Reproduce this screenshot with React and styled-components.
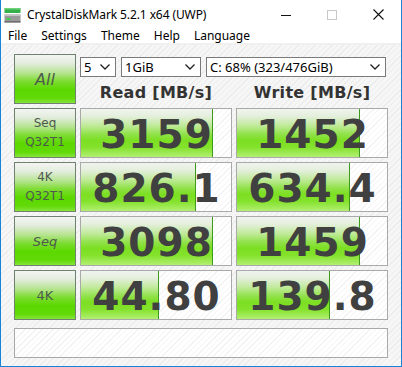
import React from 'react';
import styled, { createGlobalStyle } from 'styled-components';

const GlobalStyle = createGlobalStyle`
  html, body {
    margin: 0;
    padding: 0;
    background: #ffffff;
  }
  * {
    box-sizing: border-box;
  }
`;

const hatch = `repeating-linear-gradient(-45deg, #f6f6f6 0px, #f6f6f6 3px, #ececec 3px, #ececec 4px)`;
const hatchLight = `repeating-linear-gradient(-45deg, #ffffff 0px, #ffffff 3px, #f3f3f3 3px, #f3f3f3 4px)`;

const Window = styled.div`
  width: 402px;
  height: 367px;
  display: flex;
  flex-direction: column;
  border: 1px solid #1883d7;
  border-top: none;
  background: #ffffff;
  overflow: hidden;
`;

const TitleBar = styled.div`
  height: 29px;
  display: flex;
  align-items: center;
  padding-left: 3px;
  font-family: 'Noto Sans', 'DejaVu Sans', sans-serif;
  font-size: 12px;
  color: #000;
`;

const TitleText = styled.span`
  margin-left: 6px;
  flex: 1;
  letter-spacing: -0.1px;
`;

const WinButton = styled.div`
  width: 46px;
  height: 29px;
  display: flex;
  align-items: center;
  justify-content: center;
`;

const MenuBar = styled.div`
  height: 14px;
  display: flex;
  align-items: center;
  font-family: 'Noto Sans', 'DejaVu Sans', sans-serif;
  font-size: 12px;
  color: #000;
`;

const MenuItem = styled.span`
  padding: 0 7px;
  line-height: 14px;
`;

const Content = styled.div`
  flex: 1;
  border-top: 2px solid #f0f0f0;
  background: ${hatch};
  padding: 9px 13px 0 13px;
`;

const Grid = styled.div`
  display: grid;
  grid-template-columns: 62px 152px 152px;
  grid-auto-rows: 50px;
  column-gap: 4px;
  row-gap: 4px;
`;

const LabelButton = styled.div`
  border: 1px solid #6f826f;
  background: linear-gradient(
    #f4f5f3 0%,
    #e2ecdc 18%,
    #b4e48c 38%,
    #7cdc30 55%,
    #5cd800 72%,
    #62da08 90%,
    #86e43c 100%
  );
  display: flex;
  flex-direction: column;
  align-items: center;
  justify-content: center;
  font-family: 'DejaVu Sans', Verdana, sans-serif;
  font-size: ${p => p.$size || 12}px;
  font-style: ${p => (p.$italic ? 'italic' : 'normal')};
  color: #4e5a4c;
  line-height: 19px;
`;

const HeaderArea = styled.div`
  grid-column: 2 / span 2;
  display: flex;
  flex-direction: column;
`;

const SelectRow = styled.div`
  display: flex;
  margin-top: 3px;
  gap: 6px;
`;

const Select = styled.div`
  width: ${p => p.$w}px;
  height: 20px;
  border: 1px solid #7a7a7a;
  background: #ffffff;
  display: flex;
  align-items: center;
  justify-content: space-between;
  padding: 0 5px 0 3px;
  font-family: 'Noto Sans', 'DejaVu Sans', sans-serif;
  font-size: 13px;
  color: #000;
  & + & {
    margin-left: ${p => p.$shift || 0}px;
  }
`;

const HeaderRow = styled.div`
  display: grid;
  grid-template-columns: 152px 152px;
  column-gap: 4px;
  margin-top: 6px;
`;

const Header = styled.div`
  text-align: center;
  font-family: 'DejaVu Sans', Verdana, sans-serif;
  font-weight: bold;
  font-size: 16px;
  letter-spacing: 0.3px;
  line-height: 20px;
  color: #333333;
`;

const ValueCell = styled.div`
  position: relative;
  border: 1px solid #a9a9a9;
  background: ${hatchLight};
  overflow: hidden;
`;

const Bar = styled.div`
  position: absolute;
  left: 0;
  top: 0;
  bottom: 0;
  border-right: 1px solid #3c9a1c;
  background: linear-gradient(
    #f0f3ee 0%,
    #e4efdc 15%,
    #bfea98 35%,
    #92e24c 52%,
    #7cdf22 65%,
    #84e22c 80%,
    #b2ef72 100%
  );
`;

const Value = styled.div`
  position: relative;
  text-align: center;
  font-family: 'DejaVu Sans', Verdana, sans-serif;
  font-weight: bold;
  font-size: 39px;
  line-height: 42px;
  padding-top: 5px;
  padding-left: 1px;
  color: #404040;
  letter-spacing: 1px;
`;

const StatusBar = styled.div`
  margin-top: 8px;
  width: 374px;
  height: 30px;
  border: 1px solid #a9a9a9;
  background: ${hatchLight};
`;

const Chevron = () => (
  <svg width="10" height="6" viewBox="0 0 10 6">
    <polyline points="0.5,0.5 5,5 9.5,0.5" fill="none" stroke="#222" strokeWidth="1.3" />
  </svg>
);

const AppIcon = () => (
  <svg width="17" height="16" viewBox="0 0 17 16">
    <rect x="0.5" y="1" width="16" height="5" fill="#36b04a" />
    <rect x="0.5" y="1" width="16" height="1.5" fill="#6fd27a" />
    <rect x="0.5" y="7.5" width="16" height="8" fill="#9a9a9a" />
    <rect x="0.5" y="7.5" width="16" height="1.5" fill="#c4c4c4" />
    <rect x="0.5" y="14" width="16" height="1.5" fill="#6e6e6e" />
    <rect x="2.5" y="11" width="4" height="2" fill="#3ccf4a" />
  </svg>
);

const rows = [
  { label: ['Seq', 'Q32T1'], read: '3159', rp: 88, write: '1452', wp: 82 },
  { label: ['4K', 'Q32T1'], read: '826.1', rp: 76.5, write: '634.4', wp: 75 },
  { label: ['Seq'], size: 13, italic: true, read: '3098', rp: 88, write: '1459', wp: 82 },
  { label: ['4K'], size: 13, read: '44.80', rp: 52, write: '139.8', wp: 62 }
];

const Cell = ({ value, pct }) => (
  <ValueCell>
    <Bar style={{ width: `${pct}%` }} />
    <Value>{value}</Value>
  </ValueCell>
);

const App = () => (
  <>
    <GlobalStyle />
    <Window>
      <TitleBar>
        <AppIcon />
        <TitleText>CrystalDiskMark 5.2.1 x64 (UWP)</TitleText>
        <WinButton>
          <svg width="10" height="10" viewBox="0 0 10 10">
            <line x1="0" y1="5.5" x2="10" y2="5.5" stroke="#111" strokeWidth="1" />
          </svg>
        </WinButton>
        <WinButton>
          <svg width="10" height="10" viewBox="0 0 10 10">
            <rect x="0.5" y="0.5" width="9" height="9" fill="none" stroke="#c8c8c8" strokeWidth="1" />
          </svg>
        </WinButton>
        <WinButton>
          <svg width="11" height="11" viewBox="0 0 11 11">
            <path d="M0.5 0.5 L10.5 10.5 M10.5 0.5 L0.5 10.5" stroke="#111" strokeWidth="1.1" />
          </svg>
        </WinButton>
      </TitleBar>
      <MenuBar>
        <MenuItem>File</MenuItem>
        <MenuItem>Settings</MenuItem>
        <MenuItem>Theme</MenuItem>
        <MenuItem>Help</MenuItem>
        <MenuItem>Language</MenuItem>
      </MenuBar>
      <Content>
        <Grid>
          <LabelButton $size={16} $italic>All</LabelButton>
          <HeaderArea>
            <SelectRow>
              <Select $w={36}>
                <span>5</span>
                <Chevron />
              </Select>
              <Select $w={80}>
                <span>1GiB</span>
                <Chevron />
              </Select>
              <Select $w={180} $shift={-1}>
                <span>C: 68% (323/476GiB)</span>
                <Chevron />
              </Select>
            </SelectRow>
            <HeaderRow>
              <Header>Read [MB/s]</Header>
              <Header>Write [MB/s]</Header>
            </HeaderRow>
          </HeaderArea>
          {rows.map(r => (
            <React.Fragment key={r.label.join('-') + r.read}>
              <LabelButton $size={r.size} $italic={r.italic}>
                {r.label.map(l => (
                  <span key={l}>{l}</span>
                ))}
              </LabelButton>
              <Cell value={r.read} pct={r.rp} />
              <Cell value={r.write} pct={r.wp} />
            </React.Fragment>
          ))}
        </Grid>
        <StatusBar />
      </Content>
    </Window>
  </>
);

export default App;
